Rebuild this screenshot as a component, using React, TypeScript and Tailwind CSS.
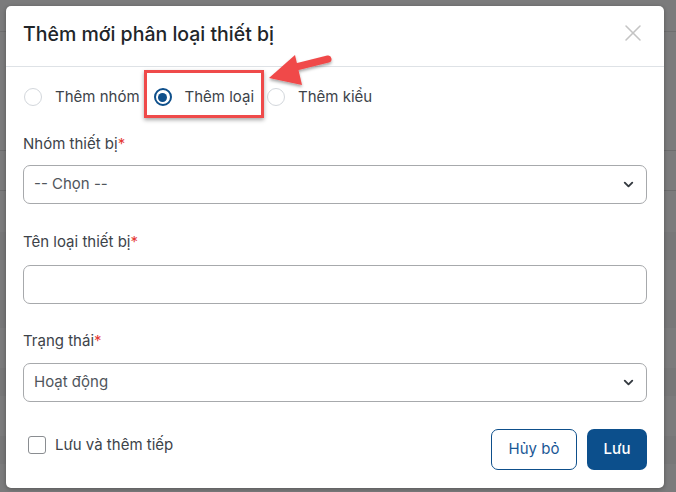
import { ChevronDown, X } from 'lucide-react';

const font = { fontFamily: 'Inter, "Noto Sans", sans-serif' };

function Radio({ label, checked }: { label: string; checked?: boolean }) {
  return (
    <label className="flex items-center gap-[13px] text-[15px] text-[#3d4349]">
      <span
        className={
          'flex h-[18px] w-[18px] items-center justify-center rounded-full border bg-white ' +
          (checked ? 'border-[#0e4f8b] border-[2px]' : 'border-[#d3d7dc]')
        }
      >
        {checked && <span className="h-[9px] w-[9px] rounded-full bg-[#0e4f8b]" />}
      </span>
      {label}
    </label>
  );
}

function Label({ text }: { text: string }) {
  return (
    <div className="text-[15px] leading-[20px] text-[#3d4349]">
      {text}
      <span className="text-[#e53935]">*</span>
    </div>
  );
}

function SelectBox({ value }: { value: string }) {
  return (
    <div className="flex h-[39px] items-center justify-between rounded-[7px] border border-[#a7a9ac] bg-white pl-[10px] pr-[10px]">
      <span className="text-[15px] text-[#50565c]">{value}</span>
      <ChevronDown size={15} strokeWidth={3} className="text-[#343a40]" />
    </div>
  );
}

export default function App() {
  return (
    <div className="relative h-[492px] w-[676px] overflow-hidden bg-[#7b7b7c]" style={font}>
      {/* faint page behind overlay */}
      <div className="absolute left-0 right-0 top-[31px] h-px bg-[#6e6e6f]" />
      <div className="absolute left-0 top-[150px] h-px w-full bg-[#6c6c6d]" />
      <div className="absolute left-0 top-[190px] h-px w-full bg-[#6c6c6d]" />
      <div className="absolute left-0 top-[232px] h-[28px] w-full bg-[#777778]" />
      <div className="absolute left-0 top-[300px] h-[28px] w-full bg-[#777778]" />
      <div className="absolute left-0 top-[368px] h-[28px] w-full bg-[#777778]" />
      <div className="absolute left-0 top-[436px] h-[28px] w-full bg-[#777778]" />

      <div className="absolute left-[6px] top-[6px] flex h-[482px] w-[658px] flex-col rounded-[5px] bg-white shadow-[0_1px_4px_rgba(0,0,0,0.3)]">
        {/* header */}
        <div className="flex h-[61px] items-center justify-between border-b border-[#dee2e6] pl-[17px] pr-[17px]">
          <h2 className="mt-[-3px] text-[19.5px] font-medium text-[#212529]">Thêm mới phân loại thiết bị</h2>
          <X size={28} strokeWidth={1.3} className="mt-[-6px] text-[#c4c4c4]" />
        </div>

        {/* body */}
        <div className="flex flex-1 flex-col px-[17px]">
          <div className="relative mt-[19px] flex items-center">
            <div className="ml-[1px]">
              <Radio label="Thêm nhóm" />
            </div>
            <div className="ml-[14px]">
              <Radio label="Thêm loại" checked />
            </div>
            <div className="ml-[13px]">
              <Radio label="Thêm kiểu" />
            </div>
            {/* highlight box */}
            <div className="pointer-events-none absolute left-[121px] top-[-16px] h-[48px] w-[120px] border-[3px] border-[#ef4a4a] shadow-[0_2px_4px_rgba(0,0,0,0.35)]" />
          </div>

          <div className="mt-[25px]">
            <Label text="Nhóm thiết bị" />
          </div>
          <div className="mt-[11px]">
            <SelectBox value="-- Chọn --" />
          </div>

          <div className="mt-[28px]">
            <Label text="Tên loại thiết bị" />
          </div>
          <div className="mt-[13px] h-[39px] rounded-[7px] border border-[#a7a9ac] bg-white" />

          <div className="mt-[27px]">
            <Label text="Trạng thái" />
          </div>
          <div className="mt-[12px]">
            <SelectBox value="Hoạt động" />
          </div>

          {/* footer */}
          <div className="mt-[27px] flex items-center justify-between">
            <label className="mb-[8px] ml-[5px] flex items-center gap-[9px] text-[15px] text-[#3d4349]">
              <span className="h-[18px] w-[18px] rounded-[3px] border border-[#8a8d91] bg-white" />
              Lưu và thêm tiếp
            </label>
            <div className="flex gap-[10px]">
              <button className="h-[41px] w-[86px] rounded-[7px] border border-[#0e4f8b] text-[15px] text-[#1b5896]">
                Hủy bỏ
              </button>
              <button className="h-[41px] w-[60px] rounded-[7px] bg-[#0c4f8c] text-[15px] font-medium text-white">
                Lưu
              </button>
            </div>
          </div>
        </div>
      </div>

      {/* arrow */}
      <svg className="pointer-events-none absolute left-0 top-0" width="676" height="492">
        <defs>
          <filter id="sh" x="-20%" y="-50%" width="140%" height="200%">
            <feDropShadow dx="0" dy="2" stdDeviation="1.5" floodColor="#000" floodOpacity="0.35" />
          </filter>
        </defs>
        <g filter="url(#sh)">
          <line x1="328" y1="59" x2="292" y2="68" stroke="#f04848" strokeWidth="7" strokeLinecap="round" />
          <polygon points="269,78 295,55 302,85" fill="#f04848" />
        </g>
      </svg>
    </div>
  );
}
